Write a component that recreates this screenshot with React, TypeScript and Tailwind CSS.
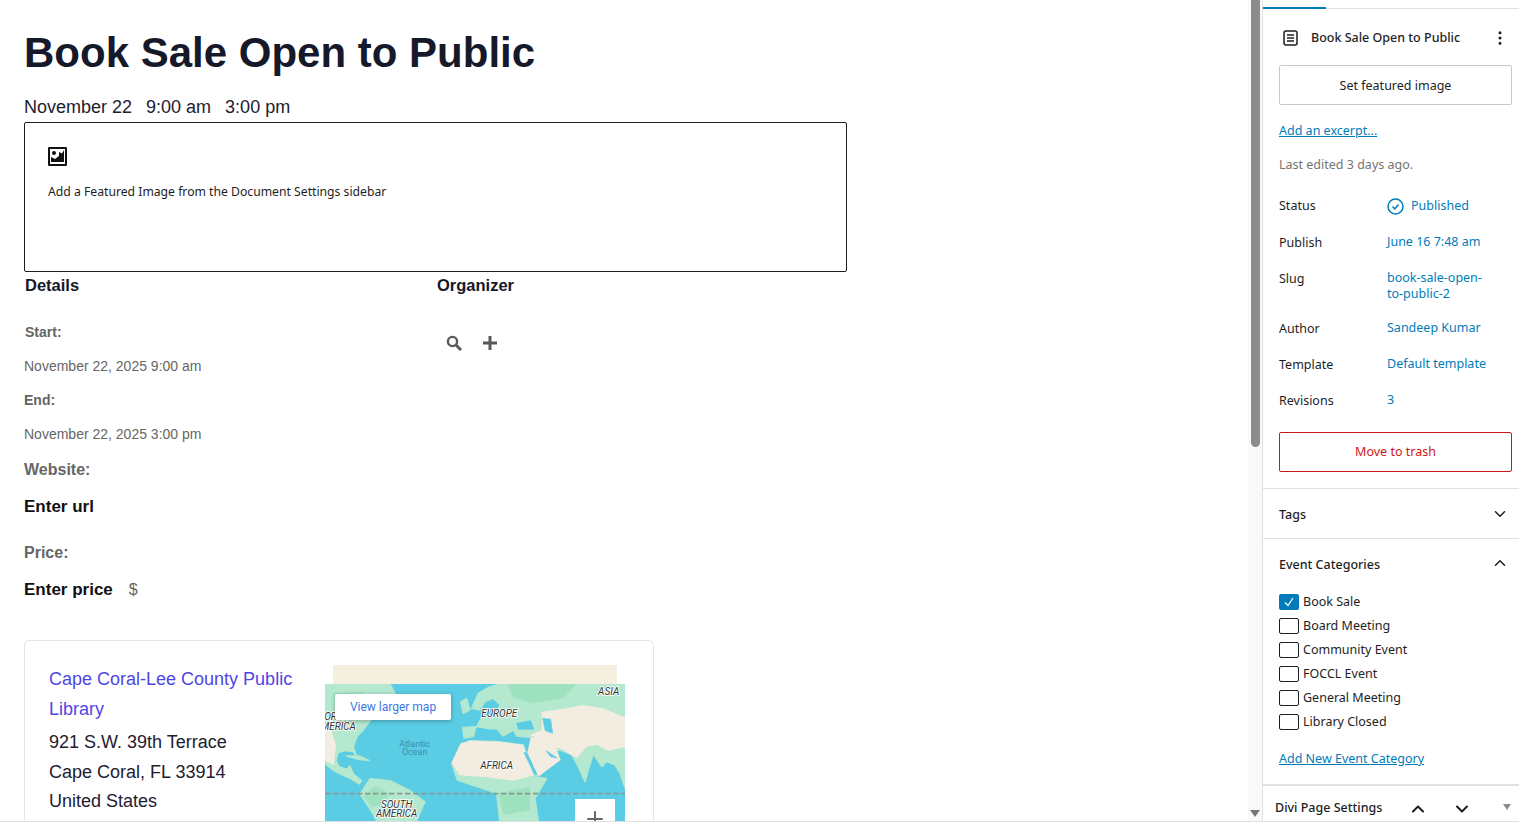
import React from "react";
import { ChevronDown, ChevronUp, EllipsisVertical, Plus } from "lucide-react";

const categories = ["Board Meeting", "Community Event", "FOCCL Event", "General Meeting", "Library Closed"];

const summaryRows = [
  { label: "Publish", value: "June 16 7:48 am", height: "h-[36px]" },
  { label: "Slug", value: "book-sale-open-to-public-2", height: "h-[50px]" },
  { label: "Author", value: "Sandeep Kumar", height: "h-[36px]" },
  { label: "Template", value: "Default template", height: "h-[36px]" },
  { label: "Revisions", value: "3", height: "h-[36px]" },
];

function MapView() {
  return (
    <div className="relative h-[170px] w-[300px] overflow-hidden bg-[#5accE4]">
      <svg className="absolute left-0 top-0 h-[170px] w-[300px]" viewBox="75 162 900 510">
        <g fill="#b4e8cf" stroke="#b4e8cf" strokeWidth="4" strokeLinejoin="round">
          {/* north and central america */}
          <path d="M75 162H270L285 190L262 200L240 232L222 240L212 270L190 300L172 318L160 350L172 385L160 365L135 362L115 368L108 392L118 410L140 418L150 408L160 432L185 452L178 462L150 445L120 432L95 418L75 400Z" />
          <path d="M140 378L180 378L208 392L175 388Z" />
          {/* uk and iberia */}
          <path d="M482 216L500 206L510 240L490 250Z" />
          <path d="M488 292L528 290L520 320L492 324Z" />
          {/* scandinavia, europe and north asia */}
          <path d="M515 235L535 190L570 170L600 162H975V475L960 430L945 405L920 395L905 410L880 372L865 420L855 456L835 410L815 375L785 362L760 360L720 345L690 322L650 318L640 300L610 318L592 300L565 296L530 290L545 262L590 250L600 225L580 205L555 215L540 240Z" />
          {/* africa and south america */}
          <path d="M455 400L482 342L510 332L600 335L670 345L690 405L712 442L740 445L705 505L715 575L730 672H610L590 490L530 470L472 450Z" />
          <path d="M180 492L210 446L270 452L330 482L375 515L350 572L320 672H260L240 590L215 545Z" />
        </g>
        <g fill="#f3ece0">
          <path d="M75 300L92 296L108 345L102 405L75 392Z" />
          <path d="M455 400L482 342L510 332L600 335L670 345L690 405L702 436L640 452L560 442L478 436Z" />
          <path d="M692 322L760 330L782 390L715 440L682 368Z" />
          <path d="M725 245L780 238L850 225L910 235L975 262V352L925 362L890 345L860 350L830 385L790 360L735 340L690 315L725 300Z" />
        </g>
        <g fill="#9fe2c0">
          <path d="M190 500L225 468L268 490L250 522L215 532Z" />
          <path d="M595 490L690 470L690 540L610 555Z" />
          <path d="M620 162H830L790 205L700 220L640 205Z" />
          <path d="M100 190L190 185L170 250L110 262Z" />
        </g>
        <g fill="#5accE4" stroke="#5accE4" strokeWidth="2" strokeLinejoin="round">
          <path d="M650 280L692 272L702 298L655 298Z" />
          <path d="M728 265L752 268L758 310L736 302Z" />
          <path d="M672 368L678 368L710 432L704 434Z" />
          <path d="M738 362L772 384L752 380Z" />
          <path d="M575 298L590 300L612 330L600 330Z" />
        </g>
        <path d="M75 491H975" stroke="#8f9794" strokeWidth="5" strokeDasharray="16 8" fill="none" />
        <g fontFamily="Roboto, sans-serif" fontStyle="italic" fontSize="30" fill="#333" stroke="#fff" strokeWidth="5" paintOrder="stroke" textAnchor="middle">
          <text x="926" y="196">ASIA</text>
          <text x="598" y="262">EUROPE</text>
          <text x="590" y="418">AFRICA</text>
          <text x="290" y="534">SOUTH</text>
          <text x="290" y="562">AMERICA</text>
          <text x="110" y="270">ORTH</text>
          <text x="115" y="300">MERICA</text>
        </g>
        <g fontFamily="Roboto, sans-serif" fontSize="27" fill="#3a8fb0" textAnchor="middle">
          <text x="344" y="351">Atlantic</text>
          <text x="344" y="375">Ocean</text>
        </g>
      </svg>
      <div className="absolute left-[10px] top-[10px] flex h-[26px] w-[116px] items-center justify-center rounded-[2px] bg-white font-['Roboto',sans-serif] text-[12px] text-[#3b78e7] shadow-[0_1px_4px_rgba(0,0,0,0.3)]">
        View larger map
      </div>
      <div className="absolute left-[250px] top-[115px] flex h-[40px] w-[40px] items-start justify-center bg-white pt-[8px] text-[#666]">
        <Plus size={24} strokeWidth={2} />
      </div>
    </div>
  );
}

function EventContent() {
  return (
    <main className="min-w-0 flex-1 overflow-hidden pl-[24px] font-['Liberation_Sans',sans-serif]">
      <h1 className="mt-[26px] h-[54px] whitespace-nowrap text-[42px] font-bold leading-[54px] text-[#151929]">Book Sale Open to Public</h1>
      <div className="mt-[16px] flex h-[22px] gap-[14px] text-[18px] leading-[22px] text-[#1e2030]">
        <span>November 22</span>
        <span>9:00 am</span>
        <span>3:00 pm</span>
      </div>
      <div className="mt-[4px] h-[150px] w-[823px] rounded-[2px] border border-[#1e1e1e] pl-[23px] pt-[24px]">
        <svg className="h-[19px] w-[19px]" viewBox="0 0 19 19">
          <path fillRule="evenodd" d="M1 0H18a1 1 0 0 1 1 1V18a1 1 0 0 1-1 1H1a1 1 0 0 1-1-1V1a1 1 0 0 1 1-1ZM2 2V17H17V2Z" fill="#111" />
          <path d="M3 15V10L7 12L11 9V5L14 6.5L16 3V15Z" fill="#111" />
          <circle cx="6" cy="6" r="2" fill="#111" />
        </svg>
        <p className="mt-[16px] font-['Noto_Sans',sans-serif] text-[12.2px] leading-[20px] text-[#1e1e1e]">Add a Featured Image from the Document Settings sidebar</p>
      </div>

      <div className="flex w-[823px]">
        <section className="w-[412px]">
          <h2 className="ml-px h-[26px] text-[16.5px] font-bold leading-[26px] text-[#151929]">Details</h2>
          <div className="mt-[24px] ml-px h-[20px] text-[14px] font-bold leading-[20px] text-[#666]">Start:</div>
          <div className="mt-[14px] h-[20px] text-[14px] leading-[20px] text-[#666]">November 22, 2025 9:00 am</div>
          <div className="mt-[14px] h-[20px] text-[14px] font-bold leading-[20px] text-[#666]">End:</div>
          <div className="mt-[14px] h-[20px] text-[14px] leading-[20px] text-[#666]">November 22, 2025 3:00 pm</div>
          <div className="mt-[14px] h-[24px] text-[16px] font-bold leading-[24px] text-[#666]">Website:</div>
          <div className="mt-[13px] h-[24px] text-[17px] font-bold leading-[24px] text-[#111]">Enter url</div>
          <div className="mt-[22px] h-[24px] text-[16px] font-bold leading-[24px] text-[#666]">Price:</div>
          <div className="mt-[13px] flex h-[24px] items-center gap-[16px] text-[17px] font-bold leading-[24px] text-[#111]">
            <span>Enter price</span>
            <span className="text-[16px] font-normal text-[#666]">$</span>
          </div>
        </section>
        <section className="ml-px">
          <h2 className="h-[26px] text-[16.5px] font-bold leading-[26px] text-[#151929]">Organizer</h2>
          <div className="mt-[37px] ml-[9px] flex items-center gap-[21px] text-[#595959]">
            <svg className="h-[16px] w-[16px]" viewBox="0 0 16 16">
              <circle cx="6.5" cy="6.5" r="4.6" fill="none" stroke="currentColor" strokeWidth="2.4" />
              <path d="M10 10L15 15" stroke="currentColor" strokeWidth="3" />
            </svg>
            <svg className="h-[14px] w-[14px]" viewBox="0 0 14 14">
              <path d="M7 0V14M0 7H14" stroke="currentColor" strokeWidth="3" />
            </svg>
          </div>
        </section>
      </div>

      <div className="mt-[38px] flex h-[300px] w-[630px] rounded-[5px] border border-[#e5e5e5] pl-[24px] pt-[23px]">
        <address className="w-[276px] not-italic text-[18px] leading-[30px] text-[#1e2030]">
          <div className="text-[#4f46e5]">Cape Coral-Lee County Public Library</div>
          <div className="mt-[3px]">921 S.W. 39th Terrace</div>
          <div>Cape Coral, FL 33914</div>
          <div className="mt-[-1px]">United States</div>
        </address>
        <div className="w-[300px] pt-px">
          <div className="mx-[8px] h-[19px] bg-[#f5efe0]" />
          <MapView />
        </div>
      </div>
    </main>
  );
}

function Sidebar() {
  return (
    <aside className="w-[257px] shrink-0 overflow-hidden border-l border-[#e0e0e0] font-['Noto_Sans',sans-serif] text-[12.5px] text-[#1e1e1e]">
      <div className="h-[9px] border-b border-[#e0e0e0] pt-[7px]">
        <div className="h-[2px] w-[63px] bg-[#007cba]" />
      </div>
      <div className="px-[16px] pr-[7px] pt-[17px]">
        <div className="flex h-[24px] items-center">
          <svg className="ml-[4px] h-[16px] w-[15px]" viewBox="0 0 15 16">
            <rect x="1" y="1" width="13" height="14" rx="2" fill="none" stroke="#1e1e1e" strokeWidth="1.5" />
            <path d="M4 5H11M4 8H11M4 11H11" stroke="#1e1e1e" strokeWidth="1.5" />
          </svg>
          <span className="ml-[13px] flex-1 whitespace-nowrap font-medium">Book Sale Open to Public</span>
          <EllipsisVertical size={18} strokeWidth={2} className="mr-[3px]" />
        </div>
        <button className="mt-[15px] flex h-[40px] w-full items-center justify-center rounded-[2px] border border-[#c8c8c8] pt-[3px]">Set featured image</button>
        <div className="mt-[17px] h-[18px] leading-[18px] text-[#007cba] underline">Add an excerpt...</div>
        <div className="mt-[16px] h-[18px] leading-[18px] text-[#757575]">Last edited 3 days ago.</div>
        <div className="mt-[21px] flex h-[39px]">
          <span className="w-[108px] pt-[2px] leading-[18px]">Status</span>
          <span className="flex h-[22px] items-center gap-[7px] pt-[1px] text-[#007cba]">
            <svg className="h-[17px] w-[17px]" viewBox="0 0 17 17">
              <circle cx="8.5" cy="8.5" r="7.5" fill="none" stroke="#007cba" strokeWidth="1.5" />
              <path d="M5.5 8.5L7.8 10.8L11.5 6.5" fill="none" stroke="#007cba" strokeWidth="1.5" />
            </svg>
            Published
          </span>
        </div>
        {summaryRows.map((row) => (
          <div key={row.label} className={`flex ${row.height}`}>
            <span className="w-[108px] leading-[18px]">{row.label}</span>
            <span className="w-[104px] leading-[16px] text-[#007cba]">{row.value}</span>
          </div>
        ))}
        <button className="mt-[4px] flex h-[40px] w-full items-center justify-center rounded-[2px] border border-[#cc1818] pt-px text-[#cc1818]">Move to trash</button>
      </div>
      <div className="mt-[16px] flex h-[51px] items-center justify-between border-y border-[#e0e0e0] pl-[16px] pr-[10px] pt-[3px] font-medium">
        Tags
        <ChevronDown size={18} strokeWidth={2} className="mb-[3px]" />
      </div>
      <div className="flex h-[51px] items-center justify-between pl-[16px] pr-[10px] pt-[2px] font-medium">
        Event Categories
        <ChevronUp size={18} strokeWidth={2} className="mb-[6px]" />
      </div>
      <div className="pl-[16px]">
        <label className="flex h-[24px] items-center gap-[4px]">
          <span className="flex h-[16px] w-[20px] items-center justify-center rounded-[2px] bg-[#007cba]">
            <svg className="h-[12px] w-[12px]" viewBox="0 0 12 12">
              <path d="M2 6.5L5 9.5L10 2" fill="none" stroke="#fff" strokeWidth="1.2" />
            </svg>
          </span>
          Book Sale
        </label>
        {categories.map((category) => (
          <label key={category} className="flex h-[24px] items-center gap-[4px]">
            <span className="h-[16px] w-[20px] rounded-[2px] border border-[#1e1e1e]" />
            {category}
          </label>
        ))}
        <div className="mt-[16px] h-[18px] leading-[18px] text-[#007cba] underline">Add New Event Category</div>
      </div>
      <div className="mt-[16px] flex h-[47px] items-center border-t-2 border-[#e0e0e0] pl-[12px] font-medium">
        <span className="w-[133px] whitespace-nowrap">Divi Page Settings</span>
        <ChevronUp size={20} strokeWidth={2.4} />
        <ChevronDown size={20} strokeWidth={2.4} className="ml-[24px]" />
        <span className="ml-[31px] mb-[4px] h-0 w-0 border-x-[4px] border-t-[6px] border-x-transparent border-t-[#8c8c8c]" />
      </div>
    </aside>
  );
}

export default function App() {
  return (
    <div className="h-[827px] w-full overflow-hidden bg-white">
      <div className="flex h-[822px] overflow-hidden border-b border-[#e0e0e0]">
        <EventContent />
        <div className="relative w-[14px] shrink-0 bg-[#f9f9f9]">
          <div className="ml-[3px] h-[447px] w-[9px] rounded-b-[5px] bg-[#8c8c8c]" />
          <div className="absolute bottom-[4px] left-[2px] h-0 w-0 border-x-[5px] border-t-[7px] border-x-transparent border-t-[#777]" />
        </div>
        <Sidebar />
      </div>
    </div>
  );
}
